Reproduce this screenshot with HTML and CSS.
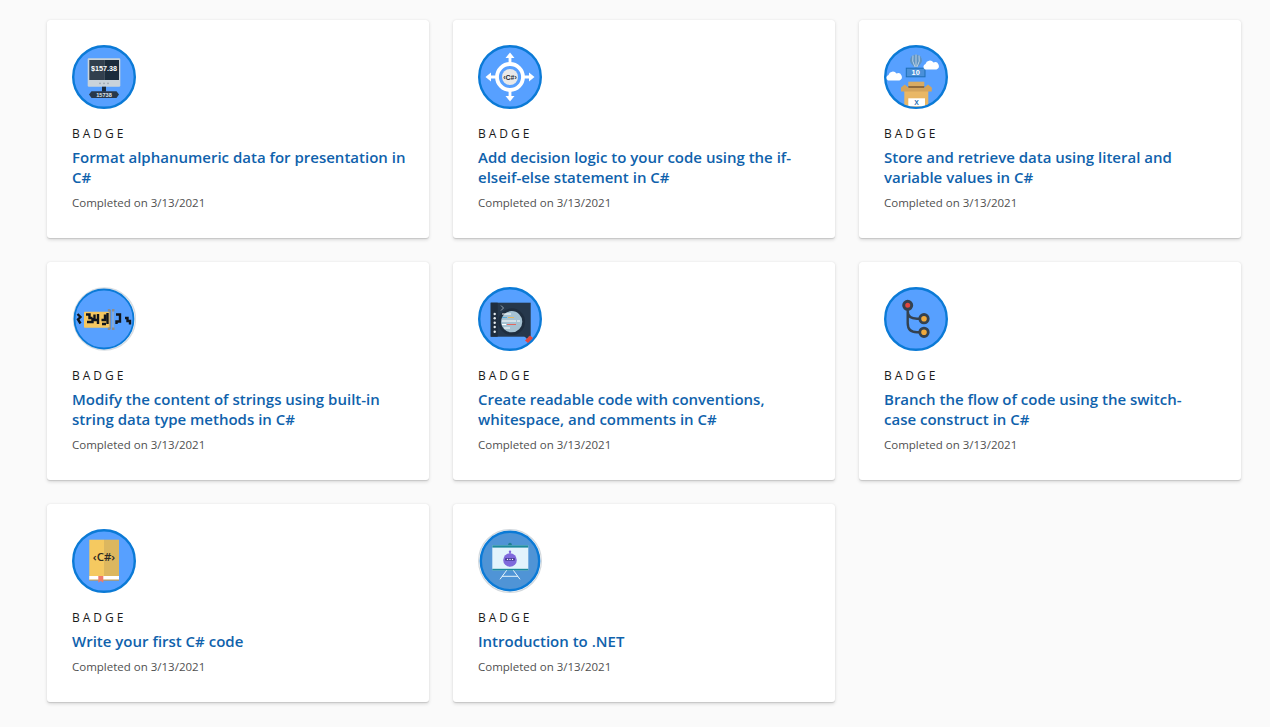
FILE: index.html
```html
<!DOCTYPE html>
<html lang="en">
<head>
    <meta charset="UTF-8">
    <meta name="viewport" content="width=device-width, initial-scale=1.0">
    <title>Badges</title>
    <link rel="stylesheet" href="styles.css">
</head>
<body>

    <div class="badge-grid">

        <div class="badge-card">
            <svg class="badge-icon" viewBox="0 0 64 64">
                <circle cx="32" cy="32" r="30.8" fill="#57a0ff" stroke="#0b7ad6" stroke-width="2.4"/>
                <rect x="15.7" y="13.3" width="32.6" height="28.4" rx="1.2" fill="#c9d3da"/>
                <rect x="17.3" y="15" width="15" height="20" fill="#323f4e"/>
                <rect x="32.3" y="15" width="14.7" height="20" fill="#1b2b3b"/>
                <circle cx="28" cy="38.3" r="0.9" fill="#98a4ad"/>
                <circle cx="32" cy="38.3" r="0.9" fill="#98a4ad"/>
                <circle cx="36" cy="38.3" r="0.9" fill="#98a4ad"/>
                <text class="icon-text" x="32" y="25.6" font-size="7.2" fill="#fff" text-anchor="middle">$157.38</text>
                <rect x="30" y="41.7" width="4" height="5" fill="#1b2b3b"/>
                <path d="M19.5 46.3H44.5L47 49.6L44.5 53H19.5L17 49.6Z" fill="#28384a"/>
                <text class="icon-text" x="32" y="51.8" font-size="5.6" fill="#dfe6ea" text-anchor="middle">15738</text>
            </svg>
            <div class="badge-label">BADGE</div>
            <a class="badge-title" href="#">Format alphanumeric data for presentation in C#</a>
            <div class="badge-date">Completed on 3/13/2021</div>
        </div>

        <div class="badge-card">
            <svg class="badge-icon" viewBox="0 0 64 64">
                <circle cx="32" cy="32" r="30.8" fill="#57a0ff" stroke="#0b7ad6" stroke-width="2.4"/>
                <circle cx="32" cy="32" r="13" fill="none" stroke="#fff" stroke-width="3.8"/>
                <circle cx="32" cy="32" r="8" fill="#e9e9e9"/>
                <path d="M32 18V11M32 46V53M18 32H11M46 32H53" stroke="#fff" stroke-width="2.8"/>
                <path d="M32 7.5L36.5 13H27.5ZM32 56.5L27.5 51H36.5ZM7.5 32L13 27.5V36.5ZM56.5 32L51 36.5V27.5Z" fill="#fff"/>
                <text class="icon-text" x="32" y="34.6" font-size="7" fill="#1d2a36" text-anchor="middle">‹C#›</text>
            </svg>
            <div class="badge-label">BADGE</div>
            <a class="badge-title" href="#">Add decision logic to your code using the if-elseif-else statement in C#</a>
            <div class="badge-date">Completed on 3/13/2021</div>
        </div>

        <div class="badge-card">
            <svg class="badge-icon" viewBox="0 0 64 64">
                <defs>
                    <clipPath id="boxClip"><circle cx="32" cy="32" r="29.8"/></clipPath>
                </defs>
                <circle cx="32" cy="32" r="30.8" fill="#57a0ff" stroke="#0b7ad6" stroke-width="2.4"/>
                <path d="M26 15.5A6 6 0 0 1 38 15.5Q38 18.5 33 22.5H31Q26 18.5 26 15.5Z" fill="#5f93c2"/>
                <path d="M29 10.5Q27.5 16 31 22M32 9.5V22M35 10.5Q36.5 16 33 22" fill="none" stroke="#c4d8e8" stroke-width="0.9"/>
                <rect x="22.3" y="23.2" width="18.7" height="8.6" fill="#4a90d9" stroke="#1f6fb5" stroke-width="1"/>
                <text class="icon-text" x="31.7" y="30.3" font-size="7.4" fill="#fff" text-anchor="middle">10</text>
                <path d="M41 24.5a3 3 0 0 1 .5-5.5a4.5 4.5 0 0 1 8-1.5a3.8 3.8 0 0 1 3 7Z" fill="#fff"/>
                <path d="M4 35.5a3 3 0 0 1 .5-5.5a4.5 4.5 0 0 1 8-1.5a3.8 3.8 0 0 1 3 7Z" fill="#fff"/>
                <g clip-path="url(#boxClip)">
                    <rect x="20.3" y="44" width="24" height="22" fill="#e9b765"/>
                    <rect x="24.3" y="36.7" width="16" height="4.5" fill="#d9ab62"/>
                    <rect x="24.3" y="41" width="16" height="2.3" fill="#8f6a3c"/>
                    <path d="M17 42.5L20.8 39.5L24.3 42.5V44H17ZM47.7 42.5L44 39.5L40.3 42.5V44H47.7Z" fill="#d4a45c"/>
                    <rect x="17" y="43" width="30.7" height="3.5" fill="#d4a45c"/>
                    <rect x="24.3" y="53.3" width="16.7" height="8" fill="#fff"/>
                    <text class="icon-text" x="32.5" y="60.3" font-size="6.8" fill="#1f6fb5" text-anchor="middle">X</text>
                </g>
            </svg>
            <div class="badge-label">BADGE</div>
            <a class="badge-title" href="#">Store and retrieve data using literal and variable values in C#</a>
            <div class="badge-date">Completed on 3/13/2021</div>
        </div>

        <div class="badge-card">
            <svg class="badge-icon" viewBox="0 0 64 64">
                <circle cx="32.5" cy="32" r="31" fill="#fff" stroke="#d8dde2" stroke-width="1.4"/>
                <circle cx="32" cy="32" r="29.5" fill="#57a0ff" stroke="#0b7ad6" stroke-width="1.8"/>
                <rect x="12" y="24.7" width="26" height="16" rx="0.8" fill="#f5c760"/>
                <path d="M5.5 27L8.500 30L6 32.500L8.500 36.500M14 27.500H17.500V31H20.500M15 35H20.500V31M22.500 27.500V33H26M26 27V37M29.500 33H33V27.500M30 37H34M35.500 26V37M44 27.500H48V34.500H44.500V37M53 31H55.500V34H58V37.500" fill="none" stroke="#10151c" stroke-width="2.400"/>
                <rect x="37.5" y="23" width="1.4" height="19" fill="#8c8c8c"/>
                <rect x="40.5" y="23" width="1" height="19" fill="#b4b4b4"/>
                <rect x="35.8" y="22" width="2.5" height="2.5" fill="#8c8c8c"/>
                <rect x="40" y="22" width="2.5" height="2.5" fill="#8c8c8c"/>
                <rect x="35.8" y="40.5" width="2.5" height="2.5" fill="#8c8c8c"/>
                <rect x="40" y="40.5" width="2.5" height="2.5" fill="#8c8c8c"/>
            </svg>
            <div class="badge-label">BADGE</div>
            <a class="badge-title" href="#">Modify the content of strings using built-in string data type methods in C#</a>
            <div class="badge-date">Completed on 3/13/2021</div>
        </div>

        <div class="badge-card">
            <svg class="badge-icon" viewBox="0 0 64 64">
                <circle cx="32" cy="32" r="30.8" fill="#57a0ff" stroke="#0b7ad6" stroke-width="2.4"/>
                <rect x="12.7" y="15.7" width="40" height="34" fill="#26384c"/>
                <rect x="12.7" y="15.7" width="7" height="34" fill="#1f2e3f"/>
                <path d="M23 18.5L25.5 21L23 23.5" fill="none" stroke="#b4c0cb" stroke-width="0.8"/>
                <circle cx="16.7" cy="27" r="1.2" fill="#e8edf1"/>
                <circle cx="16.7" cy="31.3" r="1.2" fill="#e8edf1"/>
                <circle cx="16.7" cy="35.7" r="1.2" fill="#e8edf1"/>
                <circle cx="16.7" cy="40" r="1.2" fill="#e8edf1"/>
                <circle cx="16.7" cy="44.7" r="1.2" fill="#e8edf1"/>
                <path d="M42 43L50 51" stroke="#28384a" stroke-width="2.6"/>
                <path d="M47 53.5L52 48.5L55 51L50 56Z" fill="#e2473f"/>
                <circle cx="33.7" cy="34.7" r="12" fill="#a6c2d2" stroke="#1f2e3f" stroke-width="2.8"/>
                <path d="M24 27H33M24 34H38M39 34H42M24 37.5H28M26 41H32" stroke="#fff" stroke-width="1"/>
                <path d="M30 30.5H36" stroke="#e8b65e" stroke-width="1"/>
                <path d="M29 37.5H38" stroke="#e2675f" stroke-width="1"/>
                <path d="M24 30.5H29" stroke="#5aa9d6" stroke-width="1"/>
            </svg>
            <div class="badge-label">BADGE</div>
            <a class="badge-title" href="#">Create readable code with conventions, whitespace, and comments in C#</a>
            <div class="badge-date">Completed on 3/13/2021</div>
        </div>

        <div class="badge-card">
            <svg class="badge-icon" viewBox="0 0 64 64">
                <circle cx="32" cy="32" r="30.8" fill="#57a0ff" stroke="#0b7ad6" stroke-width="2.4"/>
                <path d="M23.7 18.3V36Q23.7 45.3 33 45.3H40M23.7 24Q23.7 31.7 33 31.7H40" fill="none" stroke="#34414f" stroke-width="2.4"/>
                <circle cx="23.7" cy="18.3" r="4" fill="#e2473f" stroke="#34414f" stroke-width="3"/>
                <circle cx="40" cy="31.7" r="4.2" fill="#f0a93c" stroke="#34414f" stroke-width="2.8"/>
                <circle cx="40" cy="45.3" r="4.2" fill="#f0a93c" stroke="#34414f" stroke-width="2.8"/>
            </svg>
            <div class="badge-label">BADGE</div>
            <a class="badge-title" href="#">Branch the flow of code using the switch-<br>case construct in C#</a>
            <div class="badge-date">Completed on 3/13/2021</div>
        </div>

        <div class="badge-card">
            <svg class="badge-icon" viewBox="0 0 64 64">
                <circle cx="32" cy="32" r="30.8" fill="#57a0ff" stroke="#0b7ad6" stroke-width="2.4"/>
                <rect x="17.3" y="10.7" width="14.7" height="40.6" fill="#f5c960"/>
                <rect x="32" y="10.7" width="15" height="40.6" fill="#dcb75f"/>
                <rect x="17.3" y="47" width="29.7" height="3.7" fill="#fff"/>
                <rect x="17.3" y="50.7" width="29.7" height="0.8" fill="#b8904f"/>
                <path d="M26.3 47H31.3V53.7L28.8 52L26.3 53.7Z" fill="#ef7b6a"/>
                <text class="icon-text-soft" x="32" y="32" font-size="11.5" fill="#2e2a22" text-anchor="middle">‹C#›</text>
            </svg>
            <div class="badge-label">BADGE</div>
            <a class="badge-title" href="#">Write your first C# code</a>
            <div class="badge-date">Completed on 3/13/2021</div>
        </div>

        <div class="badge-card">
            <svg class="badge-icon" viewBox="0 0 64 64">
                <circle cx="32" cy="32" r="31.4" fill="#fff" stroke="#d2d8dd" stroke-width="1.2"/>
                <circle cx="32" cy="32" r="29.2" fill="#4f94d6" stroke="#0b7ad6" stroke-width="2.4"/>
                <circle cx="32" cy="15.5" r="1.8" fill="#1f7f93"/>
                <rect x="14.3" y="16.3" width="36" height="25" fill="#e2f3fc"/>
                <rect x="14.3" y="16.3" width="36" height="2.3" fill="#1c8a9c"/>
                <rect x="14.3" y="39.8" width="36" height="1.6" fill="#1c8a9c"/>
                <path d="M28.7 41.3L22 50.3M35.3 41.3L42 50.3M24 47.3H40" stroke="#e8f4fb" stroke-width="1" fill="none"/>
                <circle cx="32" cy="31" r="6.8" fill="#7f69dc"/>
                <circle cx="32" cy="22.8" r="1.2" fill="#7f69dc"/>
                <rect x="31.5" y="23" width="1" height="2" fill="#7f69dc"/>
                <rect x="27" y="29" width="10" height="2.8" rx="1" fill="#4a3d99"/>
                <circle cx="29.5" cy="30.4" r="0.7" fill="#fff"/>
                <circle cx="32" cy="30.4" r="0.7" fill="#fff"/>
                <circle cx="34.5" cy="30.4" r="0.7" fill="#fff"/>
            </svg>
            <div class="badge-label">BADGE</div>
            <a class="badge-title" href="#">Introduction to .NET</a>
            <div class="badge-date">Completed on 3/13/2021</div>
        </div>

    </div>

</body>
</html>
```

FILE: styles.css
```css
/* Badge list page */
body {
    margin: 0;
    font-family: "Open Sans", "Noto Sans", Arial, sans-serif;
    background-color: #fafafa;
}

.badge-grid {
    display: grid;
    grid-template-columns: repeat(3, 382px);
    gap: 24px;
    padding: 20px 0 25px 47px;
}

.badge-card {
    display: flex;
    flex-direction: column;
    align-items: flex-start;
    padding: 25px 20px 27px 25px;
    background-color: #fff;
    border-radius: 3px;
    box-shadow: 0 1.6px 3.6px rgba(0, 0, 0, 0.132), 0 0.3px 0.9px rgba(0, 0, 0, 0.108);
}

.badge-icon {
    width: 64px;
    height: 64px;
    margin-bottom: 17px;
}

.icon-text {
    font-family: "Liberation Sans", Arial, sans-serif;
    font-weight: 700;
}

.icon-text-soft {
    font-family: "Open Sans", Arial, sans-serif;
    font-weight: 600;
}

.badge-label {
    font-size: 12px;
    line-height: 16px;
    letter-spacing: 3px;
    color: #1a1a1a;
    margin-bottom: 5px;
}

.badge-title {
    font-size: 15px;
    font-weight: 600;
    line-height: 20px;
    color: #0f62ac;
    text-decoration: none;
    margin-bottom: 8px;
}

.badge-date {
    font-size: 11.5px;
    line-height: 16px;
    color: #505050;
}
```
